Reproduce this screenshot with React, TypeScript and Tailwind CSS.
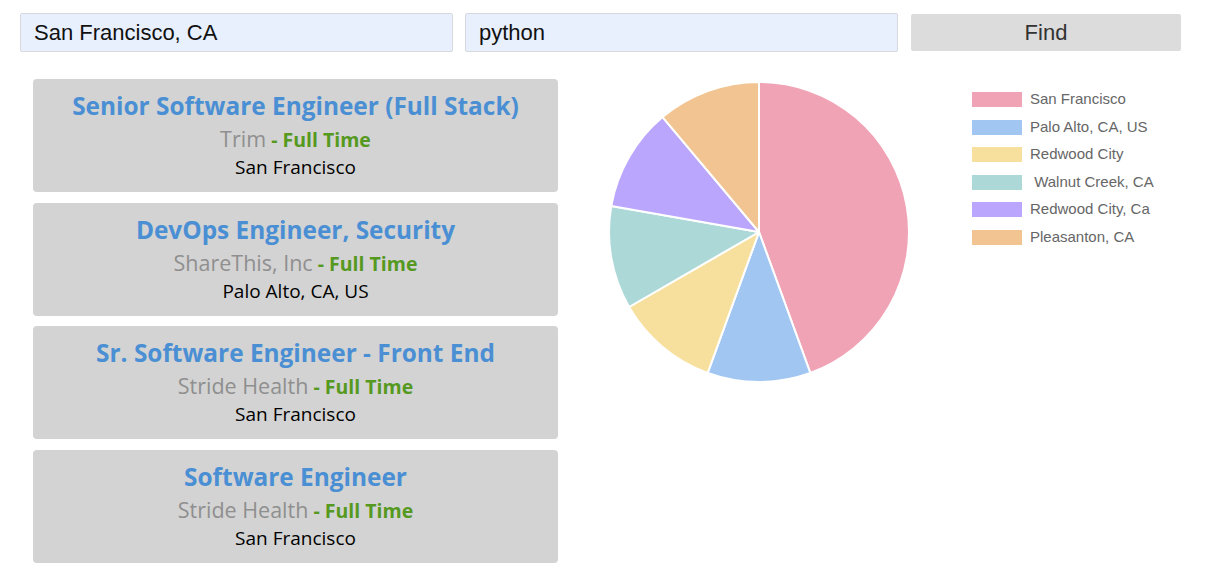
import React from "react";

const jobs = [
  { title: "Senior Software Engineer (Full Stack)", company: "Trim", loc: "San Francisco" },
  { title: "DevOps Engineer, Security", company: "ShareThis, Inc", loc: "Palo Alto, CA, US" },
  { title: "Sr. Software Engineer - Front End", company: "Stride Health", loc: "San Francisco" },
  { title: "Software Engineer", company: "Stride Health", loc: "San Francisco" },
];

const slices = [
  { label: "San Francisco", value: 4, color: "#f0a3b5" },
  { label: "Palo Alto, CA, US", value: 1, color: "#a1c6f2" },
  { label: "Redwood City", value: 1, color: "#f7e09d" },
  { label: " Walnut Creek, CA", value: 1, color: "#acd9d7" },
  { label: "Redwood City, Ca", value: 1, color: "#bba6fd" },
  { label: "Pleasanton, CA", value: 1, color: "#f2c491" },
];

function Pie() {
  const r = 150;
  const cx = 152;
  const cy = 152;
  const total = slices.reduce((a, s) => a + s.value, 0);
  let acc = 0;
  return (
    <svg width={304} height={304} viewBox="0 0 304 304">
      {slices.map((s, i) => {
        const a0 = (acc / total) * Math.PI * 2;
        acc += s.value;
        const a1 = (acc / total) * Math.PI * 2;
        const x0 = cx + r * Math.sin(a0);
        const y0 = cy - r * Math.cos(a0);
        const x1 = cx + r * Math.sin(a1);
        const y1 = cy - r * Math.cos(a1);
        const large = a1 - a0 > Math.PI ? 1 : 0;
        return (
          <path
            key={i}
            d={`M ${cx} ${cy} L ${x0} ${y0} A ${r} ${r} 0 ${large} 1 ${x1} ${y1} Z`}
            fill={s.color}
            stroke="#ffffff"
            strokeWidth={2}
            strokeLinejoin="round"
          />
        );
      })}
    </svg>
  );
}

export default function App() {
  return (
    <div className="w-[1227px] h-[569px] bg-white overflow-hidden" style={{ fontFamily: "'Liberation Sans', Arial, sans-serif" }}>
      <div className="flex items-center pl-[20px] pt-[13px] gap-[12px]">
        <input
          readOnly
          value="San Francisco, CA"
          className="w-[433px] h-[39px] bg-[#e8f0fe] border border-[#d6d9de] rounded-[2px] pl-[13px] text-[22px] text-[#111] outline-none"
          style={{ fontFamily: "'Liberation Sans', Arial, sans-serif" }}
        />
        <input
          readOnly
          value="python"
          className="w-[433px] h-[39px] bg-[#e8f0fe] border border-[#d6d9de] rounded-[2px] pl-[13px] text-[22px] text-[#111] outline-none"
          style={{ fontFamily: "'Liberation Sans', Arial, sans-serif" }}
        />
        <button className="ml-[1px] w-[270px] h-[37px] bg-[#dcdcdc] rounded-[2px] text-[22px] leading-[36px] text-[#333]">
          Find
        </button>
      </div>
      <div className="flex pt-[27px]">
        <div className="ml-[33px] w-[525px] flex flex-col gap-[10.7px]" style={{ fontFamily: "'Open Sans', 'Noto Sans', sans-serif" }}>
          {jobs.map((j, i) => (
            <div key={i} className="h-[113px] bg-[#d3d3d3] rounded-[4px] flex flex-col items-center pt-[11px]">
              <div className="text-[24.4px] leading-[32px] font-bold text-[#4a8fd4]">{j.title}</div>
              <div className="leading-[30px] mt-[2px] whitespace-pre">
                <span className="text-[21.5px] text-[#8f8f8f]">{j.company}</span>
                <span className="text-[19.5px] font-bold text-[#55991f]"> - Full Time</span>
              </div>
              <div className="text-[19px] leading-[22px] text-black">{j.loc}</div>
            </div>
          ))}
        </div>
        <div className="ml-[49px] mt-[1px]">
          <Pie />
        </div>
        <div className="ml-[61px] mt-[13px] flex flex-col gap-[12.5px]">
          {slices.map((s, i) => (
            <div key={i} className="flex items-center h-[15px]">
              <div className="w-[50px] h-[15px]" style={{ backgroundColor: s.color }} />
              <span className="ml-[8px] text-[15px] text-[#666] whitespace-pre">{s.label}</span>
            </div>
          ))}
        </div>
      </div>
    </div>
  );
}
